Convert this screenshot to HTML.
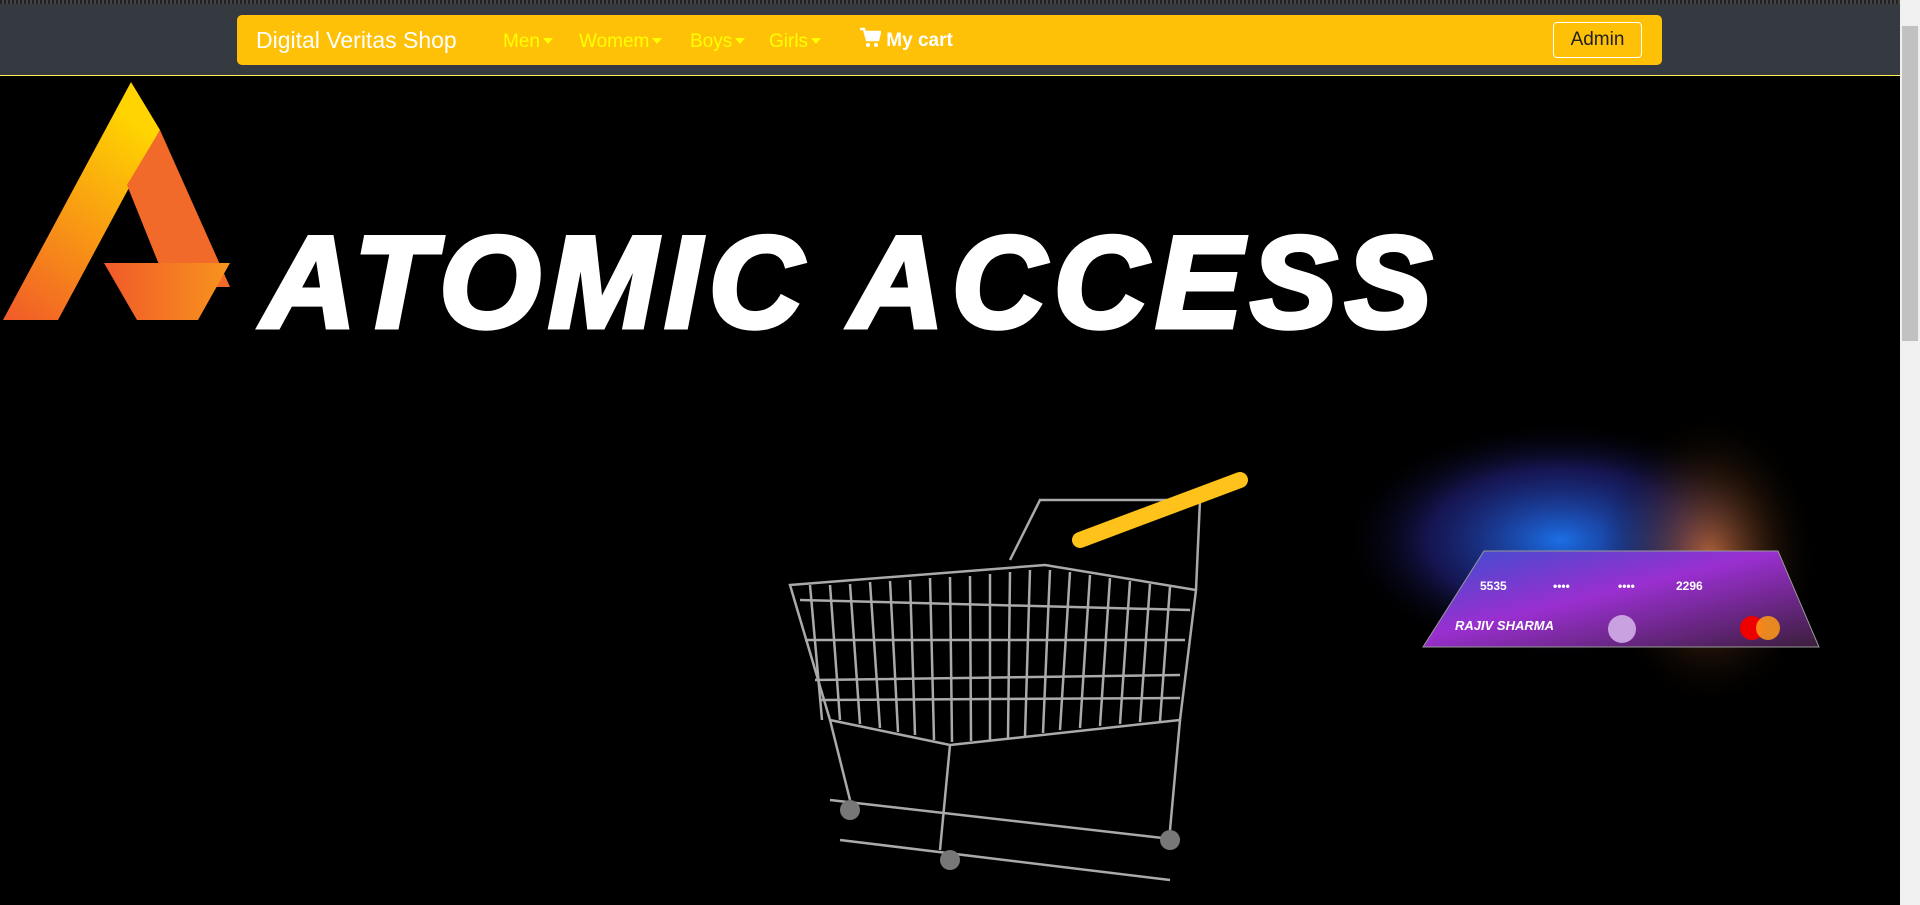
<!DOCTYPE html>
<html><head><meta charset="utf-8"><style>
*{margin:0;padding:0;box-sizing:border-box}
html,body{width:1920px;height:905px;overflow:hidden;background:#000;font-family:"Liberation Sans",sans-serif}
.top{position:absolute;left:0;top:0;width:1900px;height:76px;background:#343a40;border-bottom:1px solid #ffee55}
.stripe{position:absolute;left:0;top:0;width:1920px;height:4px;background:repeating-linear-gradient(90deg,#222 0 2px,#444 2px 4px)}
.nav{position:absolute;left:237px;top:15px;width:1425px;height:50px;background:#ffc107;border-radius:5px}
.nav span{position:absolute;top:16px;font-size:19px;color:#ffff00;white-space:nowrap}
.car{display:inline-block;width:0;height:0;border-left:5px solid transparent;border-right:5px solid transparent;border-top:6px solid #ffff00;vertical-align:3px;margin-left:3px}
.brand{left:19px!important;top:12px!important;font-size:23px!important;color:#fff!important}
.admin{position:absolute;left:1316px;top:7px;width:89px;height:36px;border:1px solid #fff;border-radius:4px;color:#222;font-size:19px;text-align:center;line-height:34px}
.sb{position:absolute;left:1900px;top:0;width:20px;height:905px;background:#f0f0f0}
.th{position:absolute;left:1902px;top:26px;width:16px;height:315px;background:#c1c1c1}
.title{position:absolute;left:262px;top:217px;font-size:130px;line-height:130px;font-weight:bold;font-style:italic;color:#fff;letter-spacing:8px;white-space:nowrap;-webkit-text-stroke:5px #fff}
</style></head><body>
<div class="top"><div class="stripe"></div>
<div class="nav">
<span class="brand">Digital Veritas Shop</span>
<span style="left:266px">Men<i class="car"></i></span>
<span style="left:342px">Womem<i class="car"></i></span>
<span style="left:453px">Boys<i class="car"></i></span>
<span style="left:532px">Girls<i class="car"></i></span>
<span style="left:622px;color:#fff;top:12px;font-weight:bold"><svg width="22" height="22" viewBox="0 0 22 22" style="vertical-align:-3px"><path d="M1 2h4l3 11h11l2-8H6" fill="none" stroke="#fff" stroke-width="2.5"/><rect x="7" y="4" width="13" height="8" fill="#fff"/><circle cx="9" cy="18" r="2" fill="#fff"/><circle cx="17" cy="18" r="2" fill="#fff"/></svg> My cart</span>
<div class="admin">Admin</div>
</div></div>
<div class="sb"></div><div class="th"></div>
<svg style="position:absolute;left:0;top:77px" width="1900" height="828" viewBox="0 77 1900 828">
<defs>
<linearGradient id="g1" x1="0" y1="1" x2="0.5" y2="0"><stop offset="0" stop-color="#f15a29"/><stop offset="1" stop-color="#ffd400"/></linearGradient>
<linearGradient id="g2" x1="0" y1="0" x2="1" y2="0"><stop offset="0" stop-color="#f15a29"/><stop offset="1" stop-color="#f7941d"/></linearGradient>
<radialGradient id="dust" cx="0.5" cy="0.5" r="0.5"><stop offset="0" stop-color="#1e7bff" stop-opacity=".9"/><stop offset=".6" stop-color="#2a2aa0" stop-opacity=".5"/><stop offset="1" stop-color="#000" stop-opacity="0"/></radialGradient>
<radialGradient id="dust2" cx="0.5" cy="0.5" r="0.5"><stop offset="0" stop-color="#ff8a3c" stop-opacity=".7"/><stop offset="1" stop-color="#000" stop-opacity="0"/></radialGradient>
<linearGradient id="card" x1="0" y1="0" x2="1" y2="1"><stop offset="0" stop-color="#3a4fd0"/><stop offset=".45" stop-color="#9a2fd0"/><stop offset="1" stop-color="#3a1e3a"/></linearGradient>
</defs>
<polygon points="131,82 3,320 58,320 160,130" fill="url(#g1)"/>
<polygon points="160,130 127,185 168,287 230,287" fill="#f26a2a"/>
<polygon points="104,263 230,263 198,320 137,320" fill="url(#g2)"/>
<ellipse cx="1560" cy="540" rx="220" ry="120" fill="url(#dust)"/>
<ellipse cx="1710" cy="560" rx="110" ry="150" fill="url(#dust2)"/>
<polygon points="1484,551 1778,551 1819,647 1423,647" fill="url(#card)" stroke="#999" stroke-width="1"/>
<g fill="#fff" font-size="12" font-weight="bold"><text x="1480" y="590">5535</text><text x="1553" y="590">••••</text><text x="1618" y="590">••••</text><text x="1676" y="590">2296</text></g>
<text x="1455" y="630" fill="#fff" font-size="13" font-weight="bold" font-style="italic">RAJIV SHARMA</text>
<ellipse cx="1622" cy="629" rx="14" ry="14" fill="#c9a0e0"/>
<circle cx="1752" cy="628" r="12" fill="#e00"/><circle cx="1768" cy="628" r="12" fill="#f7931a" opacity=".9"/>
<g fill="none" stroke="#aaa" stroke-width="2.5">
<path d="M790 585 L1045 565 L1196 590 L1180 720 L950 745 L830 720 Z"/>
<path d="M800 600 L1190 610 M805 640 L1185 640 M815 680 L1180 675 M820 700 L1180 698"/>
<path d="M810 585 L822 720 M830 585 L840 720 M850 584 L860 724 M870 582 L880 728 M890 581 L898 732 M910 580 L915 735 M930 578 L934 740 M950 577 L952 742 M970 576 L971 741 M990 574 L990 740 M1010 572 L1008 738 M1030 570 L1025 736 M1050 570 L1043 733 M1070 572 L1060 730 M1090 575 L1080 728 M1110 578 L1100 726 M1130 581 L1120 724 M1150 584 L1140 722 M1170 587 L1160 721"/>
<path d="M1010 560 L1040 500 L1200 500 L1196 590"/>
<path d="M950 745 L940 850 M1180 720 L1170 830 M830 720 L850 800 M830 800 L1180 840 M840 840 L1170 880"/>
</g>
<path d="M1080 540 L1240 480" stroke="#ffc21a" stroke-width="16" stroke-linecap="round"/>
<circle cx="950" cy="860" r="10" fill="#777"/><circle cx="1170" cy="840" r="10" fill="#777"/><circle cx="850" cy="810" r="10" fill="#777"/>
</svg>
<div class="title">ATOMIC ACCESS</div>
</body></html>
